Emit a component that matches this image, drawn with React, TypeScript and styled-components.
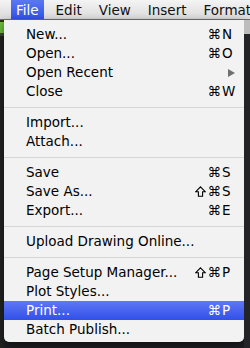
import styled, { createGlobalStyle } from "styled-components";

type Item = {
  label: string;
  shift?: boolean;
  keyName?: string;
  submenu?: boolean;
  active?: boolean;
};

const groups: Item[][] = [
  [
    { label: "New...", keyName: "N" },
    { label: "Open...", keyName: "O" },
    { label: "Open Recent", submenu: true },
    { label: "Close", keyName: "W" },
  ],
  [{ label: "Import..." }, { label: "Attach..." }],
  [
    { label: "Save", keyName: "S" },
    { label: "Save As...", shift: true, keyName: "S" },
    { label: "Export...", keyName: "E" },
  ],
  [{ label: "Upload Drawing Online..." }],
  [
    { label: "Page Setup Manager...", shift: true, keyName: "P" },
    { label: "Plot Styles..." },
    { label: "Print...", keyName: "P", active: true },
    { label: "Batch Publish..." },
  ],
];

const titles = ["File", "Edit", "View", "Insert", "Format"];

// outlined shift arrow, like the Mac menu glyph
function ShiftIcon() {
  return (
    <ShiftSvg viewBox="0 0 11 11" width="11" height="11" aria-label="Shift">
      <path
        d="M5.5 0.9 L10.2 5.7 H7.6 V10.3 H3.4 V5.7 H0.8 Z"
        fill="none"
        stroke="currentColor"
        strokeWidth="1.1"
        strokeLinejoin="miter"
      />
    </ShiftSvg>
  );
}

export default function App(): JSX.Element {
  return (
    <>
      <GlobalStyle />
      <Screen>
        <MenuBar>
          {titles.map((t, i) => (
            <MenuTitle key={t} $open={i === 0}>
              {t}
            </MenuTitle>
          ))}
        </MenuBar>
        <Desk>
          <LeftGutter />
          <Menu>
            {groups.map((group, gi) => (
              <Group key={gi}>
                {gi > 0 && <Separator />}
                {group.map((item) => (
                  <Row key={item.label} $active={!!item.active}>
                    <Label>{item.label}</Label>
                    {item.submenu ? (
                      <SubArrow />
                    ) : (
                      item.keyName && (
                        <Shortcut>
                          {item.shift && <ShiftIcon />}
                          <Cmd>⌘</Cmd>
                          <KeyName>{item.keyName}</KeyName>
                        </Shortcut>
                      )
                    )}
                  </Row>
                ))}
              </Group>
            ))}
          </Menu>
          <RightGutter />
        </Desk>
      </Screen>
    </>
  );
}

const GlobalStyle = createGlobalStyle`
  html, body {
    margin: 0;
    padding: 0;
    background: #1e1f22;
  }
  body {
    font-family: "DejaVu Sans", "Liberation Sans", sans-serif;
  }
`;

const Screen = styled.div`
  width: 250px;
  height: 348px;
  display: flex;
  flex-direction: column;
  overflow: hidden;
  background: #1e1f22;
`;

const MenuBar = styled.div`
  height: 19px;
  display: flex;
  align-items: stretch;
  gap: 7px;
  padding-left: 11px;
  background: linear-gradient(#f4f4f4, #dadada);
  border-bottom: 1px solid #6e6e6e;
  white-space: nowrap;
`;

const MenuTitle = styled.div<{ $open: boolean }>`
  padding: 1px 5px 0;
  font-size: 13.5px;
  line-height: 18px;
  color: ${(p) => (p.$open ? "#fff" : "#111")};
  background: ${(p) =>
    p.$open ? "linear-gradient(#5b78f2, #3152ea)" : "transparent"};
`;

const Desk = styled.div`
  flex: 1;
  display: flex;
  align-items: flex-start;
`;

const LeftGutter = styled.div`
  width: 4px;
  align-self: stretch;
  background: linear-gradient(
    #2c2f2a 0 2px,
    #6cbf3c 2px 13px,
    #3a4a33 13px 16px,
    #202320 16px
  );
`;

const RightGutter = styled.div`
  flex: 1;
  align-self: stretch;
  background: linear-gradient(#bcbcbc 0 14px, #232427 14px);
`;

const Menu = styled.div`
  width: 240px;
  padding: 5px 0 3px;
  background: #f2f2f2;
  border-radius: 0 0 5px 5px;
  box-shadow: 0 3px 8px rgba(0, 0, 0, 0.5);
`;

const Group = styled.div``;

const Separator = styled.div`
  height: 12px;
  display: flex;
  align-items: center;

  &::after {
    content: "";
    flex: 1;
    height: 1px;
    background: #d6d6d6;
  }
`;

const Row = styled.div<{ $active: boolean }>`
  height: 19px;
  display: flex;
  align-items: center;
  justify-content: space-between;
  padding: 0 11px 0 22px;
  font-size: 13.5px;
  line-height: 19px;
  white-space: nowrap;
  color: ${(p) => (p.$active ? "#fff" : "#000")};
  background: ${(p) =>
    p.$active ? "linear-gradient(#6078f3, #3050ea)" : "transparent"};
`;

const Label = styled.span``;

const Shortcut = styled.span`
  display: flex;
  align-items: center;
`;

const ShiftSvg = styled.svg`
  margin-right: 2px;
  margin-top: -1px;
`;

const Cmd = styled.span`
  margin-right: 1px;
`;

const KeyName = styled.span`
  width: 11px;
  text-align: left;
`;

const SubArrow = styled.span`
  width: 0;
  height: 0;
  margin-right: -2px;
  border-top: 4px solid transparent;
  border-bottom: 4px solid transparent;
  border-left: 7px solid #6f6f6f;
`;
